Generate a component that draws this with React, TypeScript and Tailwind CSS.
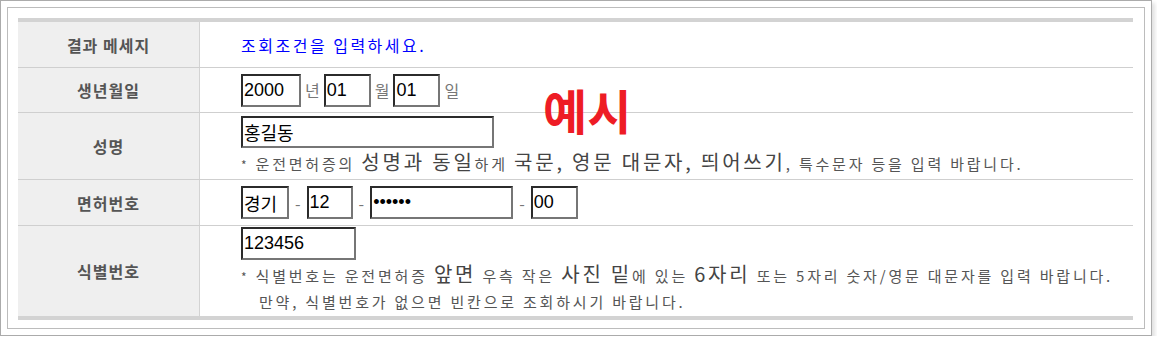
import React from 'react';

const KR = { fontFamily: '"Noto Sans CJK KR", "Noto Sans", sans-serif' };
const INPUT_FONT = { fontFamily: '"Liberation Sans", "Noto Sans CJK KR", sans-serif' };

interface BoxProps {
  value: string;
  width: number;
  type?: string;
}

const Box: React.FC<BoxProps> = ({ value, width, type = 'text' }) => (
  <input
    type={type}
    readOnly
    value={value}
    style={{ ...INPUT_FONT, width }}
    className="h-[33px] border-2 border-t-[#2b2b2b] border-l-[#2b2b2b] border-b-[#767676] border-r-[#767676] bg-white pl-[1px] text-[18px] text-black outline-none"
  />
);

const Label: React.FC<{ children: React.ReactNode }> = ({ children }) => (
  <div className="flex w-[182px] shrink-0 items-center justify-center border-r border-[#d3d3d3] bg-[#efefef] text-[16px] font-bold tracking-[1px] text-[#555]">
    {children}
  </div>
);

const Big: React.FC<{ children: React.ReactNode }> = ({ children }) => (
  <span className="text-[20px] text-[#444]">{children}</span>
);

const Dash = () => <span className="px-[6px] text-[16px] text-[#777]">-</span>;

const Unit: React.FC<{ children: React.ReactNode }> = ({ children }) => (
  <span className="px-[4px] text-[16px] text-[#777]">{children}</span>
);

export default function App() {
  return (
    <div className="bg-white" style={KR}>
      <div className="h-[336px] w-[1152px] border border-[#ababab] bg-white p-[6px] shadow-[3px_3px_4px_rgba(0,0,0,0.12)]">
        <div className="relative h-full w-full border border-[#bcbcbc] pl-[10px] pr-[11px] pt-[10px]">
          <div className="border-t-4 border-b-4 border-[#d3d3d3]">
            <div className="flex h-[46px] border-b border-[#cfcfcf]">
              <Label>결과 메세지</Label>
              <div className="flex items-center pl-[41px] text-[16px] tracking-[2.5px] text-[#0000ff]">
                조회조건을 입력하세요.
              </div>
            </div>

            <div className="flex h-[45px] border-b border-[#cfcfcf]">
              <Label>생년월일</Label>
              <div className="flex items-center pl-[41px]">
                <Box value="2000" width={60} />
                <Unit>년</Unit>
                <Box value="01" width={47} />
                <Unit>월</Unit>
                <Box value="01" width={47} />
                <Unit>일</Unit>
              </div>
            </div>

            <div className="flex h-[67px] border-b border-[#cfcfcf]">
              <Label>성명</Label>
              <div className="flex flex-col pl-[41px] pt-[3px]">
                <Box value="홍길동" width={253} />
                <div className="whitespace-nowrap text-[15px] leading-[28px] tracking-[2.8px] text-[#555]">
                  <span className="text-[12px]">*</span> 운전면허증의 <Big>성명과 동일</Big>하게 <Big>국문, 영문 대문자, 띄어쓰기</Big>, 특수문자 등을 입력 바랍니다.
                </div>
              </div>
            </div>

            <div className="flex h-[46px] border-b border-[#cfcfcf]">
              <Label>면허번호</Label>
              <div className="flex items-center pl-[41px]">
                <Box value="경기" width={48} />
                <Dash />
                <Box value="12" width={46} />
                <Dash />
                <Box value="abcdef" width={143} type="password" />
                <Dash />
                <Box value="00" width={47} />
              </div>
            </div>

            <div className="flex h-[90px]">
              <Label>식별번호</Label>
              <div className="flex flex-col pl-[41px] pt-[1px]">
                <Box value="123456" width={115} />
                <div className="whitespace-nowrap text-[15px] leading-[28px] tracking-[2.8px] text-[#555]">
                  <span className="text-[12px]">*</span> 식별번호는 운전면허증 <Big>앞면</Big> 우측 작은 <Big>사진 밑</Big>에 있는 <Big>6자리</Big> 또는 5자리 숫자/영문 대문자를 입력 바랍니다.
                </div>
                <div className="-mt-[2px] whitespace-nowrap pl-[18px] text-[15px] leading-[26px] tracking-[2.8px] text-[#555]">
                  만약, 식별번호가 없으면 빈칸으로 조회하시기 바랍니다.
                </div>
              </div>
            </div>
          </div>

          <div className="absolute left-[535px] top-[77px] text-[48px] font-bold leading-none text-[#ee1c25]">
            예시
          </div>
        </div>
      </div>
    </div>
  );
}
